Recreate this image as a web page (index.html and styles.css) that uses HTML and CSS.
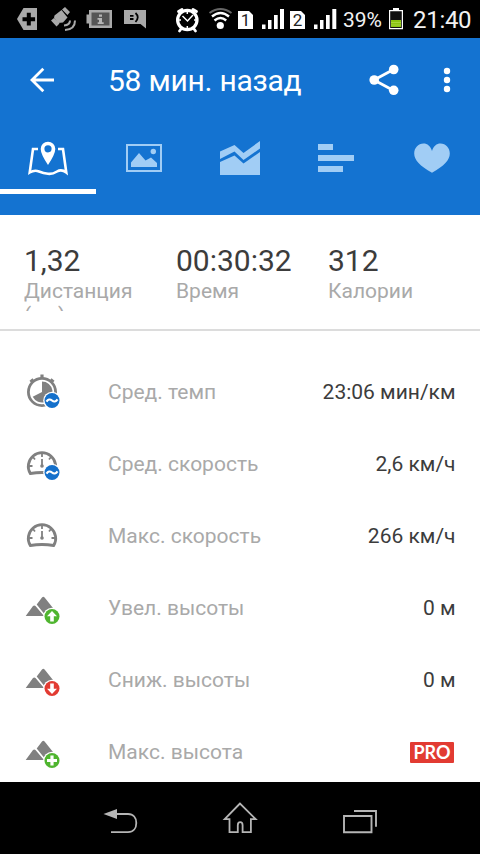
FILE: index.html
```html
<!DOCTYPE html>
<html lang="ru">
<head>
<meta charset="utf-8">
<title>Тренировка</title>
<link rel="stylesheet" href="styles.css">
</head>
<body>
<div class="screen">
  <div class="status">
    <svg width="44" height="38" viewBox="0 0 44 38"><path fill="#a9a9a9" d="M17 19 23.500 8H37v22H23.500z"/><path d="M28.800 12.800v12.800M22.500 19.200h12.600" stroke="#000" stroke-width="4"/></svg>
    <svg width="38" height="38" viewBox="44 0 38 38"><g fill="#a9a9a9"><path d="m54.500 15.500 7-5.500 6 7.500-4.500 5-5 .5-4-5z"/><path d="m62 9.500 3-2.500 5 5-2.500 3zM51 20.500l3-2.500 5.500 5.500-3 3z"/></g><path fill="none" stroke="#a9a9a9" stroke-width="2" d="M70 20.500q0 4.500-6 5M75 20.500q0 9-10 9.500"/></svg>
    <svg width="36" height="38" viewBox="82 0 36 38"><path fill="#a9a9a9" d="M86.500 14.500H89V10h23v18H89v-4.500h-2.500z"/><path fill="#555" d="M91.500 12.500h18v13h-18z"/><path fill="#b5b5b5" d="M99 14.500h3v2.200h-3zM97.500 18h4.500v4.200h1.700V24h-6v-1.800H99v-2.500h-1.500z"/></svg>
    <svg width="54" height="38" viewBox="118 0 54 38"><path fill="#a9a9a9" d="M124 10h22v18.500L140.500 24H124z"/><path fill="none" stroke="#000" stroke-width="1.800" d="M130 15.800h3.500M130 19h3.500M135.500 13q4.500 4.200 0 9"/></svg>
    <svg width="34" height="38" viewBox="172 0 34 38"><circle cx="187.300" cy="20" r="9.700" fill="none" stroke="#fff" stroke-width="3.200"/><path stroke="#fff" stroke-width="2.800" stroke-linecap="round" d="m178.500 11.500 3.500-2M193 9.500l3.500 2M181 29l-1.500 2M194 29l1.500 2"/><path fill="none" stroke="#fff" stroke-width="1.500" d="m182.500 16 5 5 5.500-6M187.300 11v3M187.300 26v3M178 20h3M194 20h3"/></svg>
    <svg width="29" height="38" viewBox="206 0 29 38"><circle cx="220.300" cy="25.500" r="3.600" fill="#fff"/><g fill="none" stroke="#fff" stroke-width="2.400"><path d="M214.500 20.500q6-5 11.700 0"/><path d="M212 16.500q8.500-7 17 0"/><path stroke="#666" stroke-width="2" d="M209.500 13q11-8 22 0"/></g></svg>
    <span class="sim">1</span>
    <svg width="36" height="38" viewBox="254 0 36 38"><path fill="#fff" d="M262 24.500h3.500V29H262zM268 20h3.500v9H268zM274 15h3.700v14H274zM280 9h4v20h-4z"/></svg>
    <span class="sim sim-two">2</span>
    <svg width="37" height="38" viewBox="306 0 37 38"><path fill="#fff" d="M314 24.500h3.500V29H314zM320 20h3.500v9H320zM326 15h3.700v14H326zM332.300 9h4v20h-4z"/></svg>
    <span class="percent">39%</span>
    <svg width="30" height="38" viewBox="383 0 30 38"><path fill="#fff" d="M393 8h6v3h-6z"/><path fill="#111" stroke="#fff" stroke-width="1.200" d="M389.600 10.600h12.800v18h-12.800z"/><path fill="#8bc411" d="M391 20h10v7h-10z"/><path stroke="#b2dc4b" stroke-width=".7" d="M391 22.500h10M391 25h10"/></svg>
    <span class="clock">21:40</span>
  </div>

  <header class="header">
    <div class="toolbar">
      <svg width="108" height="84" viewBox="0 38 108 84"><path fill="none" stroke="#fff" stroke-width="2.800" d="M54 80H32M43.300 68.800 32 80l11.300 11.200"/></svg>
      <h1 class="title">58 мин. назад</h1>
      <svg width="60" height="84" viewBox="356 38 60 84"><path fill="none" stroke="#fff" stroke-width="2.800" d="m393.500 69.500-19.500 10.500 19.500 10.500"/><g fill="#fff"><circle cx="393.700" cy="69.500" r="4.800"/><circle cx="374.200" cy="80" r="4.800"/><circle cx="393.700" cy="90.300" r="4.800"/></g></svg>
      <svg width="64" height="84" viewBox="416 38 64 84"><g fill="#fff"><circle cx="447" cy="71" r="3.200"/><circle cx="447" cy="80" r="3.200"/><circle cx="447" cy="89" r="3.200"/></g></svg>
    </div>
    <nav class="tabs">
      <div class="tab active"><svg width="96" height="67" viewBox="0 122 96 67"><path fill="none" stroke="#fff" stroke-width="2.600" d="M38 149h-5l-3.300 23.500q4.800-2.800 9.300-1t9 2.300 9-2.300 9.300 1L63 149h-5"/><path fill="#fff" fill-rule="evenodd" d="M48 165q-7.300-11-7.300-16a7.300 7.300 0 0 1 14.600 0q0 5-7.300 16zM48 145.200a3.600 3.600 0 1 0 0 7.200 3.600 3.600 0 0 0 0-7.200z"/></svg></div>
      <div class="tab"><svg width="96" height="67" viewBox="96 122 96 67"><path fill="none" stroke="#a1cdf5" stroke-width="2" d="M127 145h34v26h-34z"/><path fill="#a1cdf5" d="M131 167v-4.500l8-9.500 6.500 7.500 5.500-3 6 5.500v4z"/><circle cx="153.300" cy="151.500" r="2.700" fill="#a1cdf5"/></svg></div>
      <div class="tab"><svg width="96" height="67" viewBox="192 122 96 67"><g fill="#a1cdf5"><path d="m220 151.500 14.500-6.500 9 8 16.500-12v7.500L243.500 160l-9-8.500L220 159z"/><path d="m220 162 14.500-6.500 9 8 16.500-11.500v23h-40z"/></g></svg></div>
      <div class="tab"><svg width="96" height="67" viewBox="288 122 96 67"><path fill="#a1cdf5" d="M318 144h15v6h-15zM318 155h36v6h-36zM318 166h25v6h-25z"/></svg></div>
      <div class="tab"><svg width="96" height="67" viewBox="384 122 96 67"><path fill="#a1cdf5" d="M432 172.800C420 166 414.200 160 414.200 153.500c0-5.500 4-10 9.300-10 4 0 7 2.500 8.500 7.500 1.500-5 4.500-7.500 8.500-7.500 5.300 0 9.300 4.500 9.300 10 0 6.500-5.800 12.500-17.800 19.300z"/></svg></div>
    </nav>
  </header>

  <section class="summary">
    <div class="stat"><div class="stat-value">1,32</div><div class="stat-label">Дистанция (км)</div></div>
    <div class="stat"><div class="stat-value">00:30:32</div><div class="stat-label">Время</div></div>
    <div class="stat"><div class="stat-value">312</div><div class="stat-label">Калории</div></div>
  </section>

  <main class="list">
    <div class="row">
      <svg width="108" height="72" viewBox="0 356 108 72"><circle cx="42" cy="392" r="13.600" fill="none" stroke="#808080" stroke-width="2.800"/><path stroke="#808080" stroke-width="3.200" d="M42 374.500v4M30.500 382l3-2.500M50.500 379.500l3 2.500"/><path fill="#808080" d="M42 392v-10.500a10.500 10.500 0 1 1-9.300 15.300z"/><circle cx="52" cy="400.500" r="8.800" fill="#fff"/><circle cx="52" cy="400.500" r="7.500" fill="#1470cb"/><path fill="none" stroke="#fff" stroke-width="2.200" d="M46.500 401.700q2.500-3.700 5.500-1.200t5.500-1.200"/></svg>
      <span class="label">Сред. темп</span><span class="value">23:06 мин/км</span>
    </div>
    <div class="row">
      <svg width="108" height="72" viewBox="0 428 108 72"><path fill="none" stroke="#808080" stroke-width="2.800" d="M30.300 473.500a13.700 13.700 0 1 1 23.400 0q-11.700-2-23.400 0z"/><path stroke="#808080" stroke-width="1.800" d="M42 453v4M33 457l2 2.500M51 457l-2 2.500M29 466h3.500M51.500 466H55M42 459v7"/><circle cx="42" cy="466" r="1.800" fill="#808080"/><circle cx="52" cy="472.500" r="8.800" fill="#fff"/><circle cx="52" cy="472.500" r="7.500" fill="#1470cb"/><path fill="none" stroke="#fff" stroke-width="2.200" d="M46.500 473.700q2.500-3.700 5.500-1.200t5.500-1.200"/></svg>
      <span class="label">Сред. скорость</span><span class="value">2,6 км/ч</span>
    </div>
    <div class="row">
      <svg width="108" height="72" viewBox="0 428 108 72"><path fill="none" stroke="#808080" stroke-width="2.800" d="M30.300 473.500a13.700 13.700 0 1 1 23.400 0q-11.700-2-23.400 0z"/><path stroke="#808080" stroke-width="1.800" d="M42 453v4M33 457l2 2.500M51 457l-2 2.500M29 466h3.500M51.500 466H55M42 459v7"/><circle cx="42" cy="466" r="1.800" fill="#808080"/></svg>
      <span class="label">Макс. скорость</span><span class="value">266 км/ч</span>
    </div>
    <div class="row">
      <svg width="108" height="72" viewBox="0 572 108 72"><path fill="#808080" d="M25.700 616 33 606q1.300-1.200 2.500 0l8.500 10zM36.700 604.500l5.300-7q1.300-1.500 2.600 0L53 608l-4 8h-3z"/><circle cx="52" cy="616.500" r="8.800" fill="#fff"/><circle cx="52" cy="616.500" r="7.500" fill="#4fb52f"/><path fill="#fff" d="m52 611 5 5.300h-3.200v5.200h-3.600v-5.200H47z"/></svg>
      <span class="label">Увел. высоты</span><span class="value">0 м</span>
    </div>
    <div class="row">
      <svg width="108" height="72" viewBox="0 572 108 72"><path fill="#808080" d="M25.700 616 33 606q1.300-1.200 2.500 0l8.500 10zM36.700 604.500l5.300-7q1.300-1.500 2.600 0L53 608l-4 8h-3z"/><circle cx="52" cy="616.500" r="8.800" fill="#fff"/><circle cx="52" cy="616.500" r="7.500" fill="#e23b32"/><path fill="#fff" d="m52 622-5-5.300h3.200v-5.200h3.600v5.200H57z"/></svg>
      <span class="label">Сниж. высоты</span><span class="value">0 м</span>
    </div>
    <div class="row">
      <svg width="108" height="72" viewBox="0 572 108 72"><path fill="#808080" d="M25.700 616 33 606q1.300-1.200 2.500 0l8.500 10zM36.700 604.500l5.300-7q1.300-1.500 2.600 0L53 608l-4 8h-3z"/><circle cx="52" cy="616.500" r="8.800" fill="#fff"/><circle cx="52" cy="616.500" r="7.500" fill="#4fb52f"/><path stroke="#fff" stroke-width="3.200" d="M52 611.500v10M47 616.500h10"/></svg>
      <span class="label">Макс. высота</span><span class="pro">PRO</span>
    </div>
  </main>

  <footer class="navbar">
    <svg width="160" height="72" viewBox="40 782 160 72"><path fill="#b5b5b5" d="m103.500 814 13.500-5v10z"/><path fill="none" stroke="#b5b5b5" stroke-width="1.800" d="M116 814h12c5.500 0 8.300 4 8.300 9s-2.800 9.200-8.300 9.200h-17"/></svg>
    <svg width="80" height="72" viewBox="200 782 80 72"><path fill="none" stroke="#b5b5b5" stroke-width="1.800" d="m240 803.500-15.300 15.700h4.800v13h8.300v-7q0-3 2.400-3t2.400 3v7h8.300v-13h4.800z"/></svg>
    <svg width="160" height="72" viewBox="280 782 160 72"><path fill="none" stroke="#b5b5b5" stroke-width="1.900" d="M344 816h27.500v16.200H344zM354 811h22v15.700"/></svg>
  </footer>
</div>
</body>
</html>
```
FILE: styles.css
```css
* { box-sizing: border-box; }
body { margin: 0; font-family: Roboto, "Noto Sans", sans-serif; background: #fff; }
svg { display: block; flex: none; }
.screen { width: 480px; height: 854px; display: flex; flex-direction: column; overflow: hidden; }

.status { height: 38px; flex: none; display: flex; align-items: center; background: #000; color: #f2f2f2; }
.sim {
  width: 15px; height: 18px; margin: 2px 1px 0 3px; background: #fff; color: #222;
  font-size: 17px; line-height: 18px; text-align: center;
  clip-path: polygon(0 0, 11px 0, 100% 4px, 100% 100%, 0 100%);
}
.sim-two { margin: 2px 1px 0 0; }
.percent { width: 40px; padding-top: 2px; font-size: 21px; line-height: 38px; white-space: nowrap; }
.clock { font-size: 24px; line-height: 38px; letter-spacing: -0.3px; padding-top: 1px; }

.header { height: 177px; flex: none; background: #1473d1; color: #fff; }
.toolbar { height: 84px; display: flex; align-items: center; }
.title { flex: 1; margin: 0; padding-top: 1px; font-size: 30px; font-weight: 400; line-height: 83px; letter-spacing: -0.25px; white-space: nowrap; }
.tabs { display: grid; grid-template-columns: repeat(5, 96px); }
.tab { height: 72px; border-bottom: 5px solid transparent; }
.tab.active { border-bottom-color: #fff; }

.summary {
  height: 116px; flex: none; padding: 28px 0 0 24px; border-bottom: 2px solid #dcdcdc;
  display: grid; grid-template-columns: repeat(3, 152px);
}
.stat { height: 68px; overflow: hidden; }
.stat-value { font-size: 30px; line-height: 36px; color: #3c3c3c; }
.stat-label { width: 128px; font-size: 21px; line-height: 24px; color: #a9a9a9; }

.list { height: 451px; flex: none; padding-top: 25px; overflow: hidden; }
.row { height: 72px; display: flex; align-items: center; padding-right: 24.5px; font-size: 21px; }
.label { flex: 1; color: #a9a9a9; }
.value { color: #3c3c3c; }
.pro {
  width: 44px; height: 21px; margin-right: 1.5px; border-radius: 1px; background: #e23b32; color: #fff;
  font: 700 18px/21px Lato, sans-serif; text-align: center;
}

.navbar { height: 72px; flex: none; display: flex; justify-content: center; background: #000; }
```
